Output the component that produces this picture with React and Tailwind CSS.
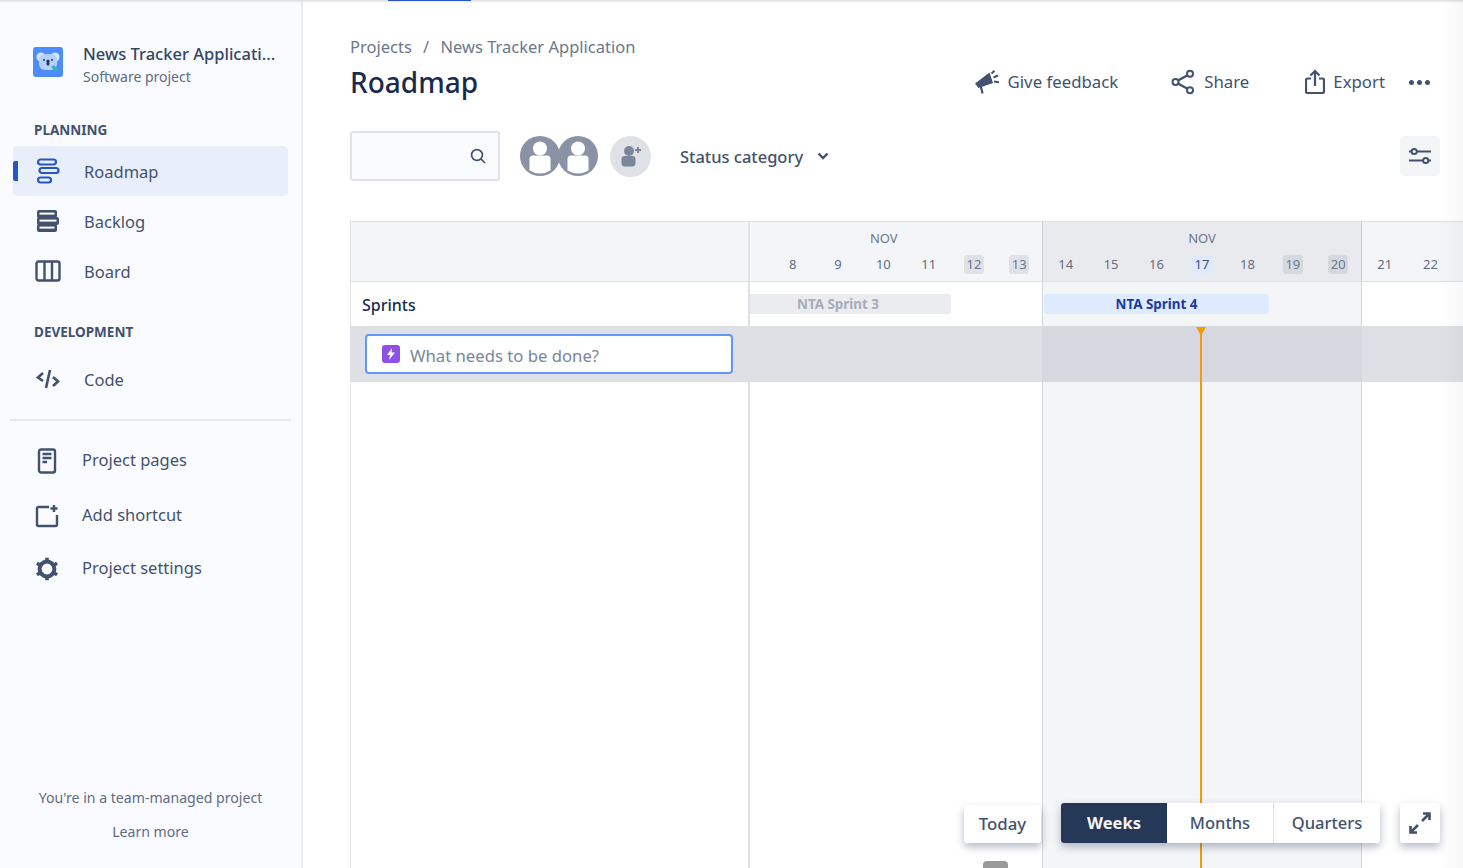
const DAYS_A = [8, 9, 10, 11, 12, 13]
const DAYS_B = [14, 15, 16, 17, 18, 19, 20]
const DAYS_C = [21, 22]

function Koala() {
  return (
    <svg width="30" height="30" viewBox="0 0 30 30">
      <rect width="30" height="30" rx="3" fill="#4c8cff" />
      <circle cx="8" cy="10" r="4.5" fill="#d6e6ff" />
      <circle cx="22" cy="10" r="4.5" fill="#d6e6ff" />
      <rect x="6" y="7" width="18" height="16" rx="6" fill="#b3d0ff" />
      <circle cx="11" cy="13" r="1" fill="#253858" />
      <circle cx="19" cy="13" r="1" fill="#253858" />
      <rect x="13.5" y="12.5" width="3" height="6" rx="1.5" fill="#253858" />
      <path d="M18 20l3-2 4 5-2 2z" fill="#36b3a8" />
    </svg>
  )
}

const ic = { fill: 'none', stroke: '#42526e', strokeWidth: 2 }

function RoadmapIcon() {
  return (
    <svg width="24" height="26" viewBox="0 0 24 26" fill="none" stroke="#2456c9" strokeWidth="2.2">
      <rect x="2" y="1.5" width="18" height="5" rx="2.5" />
      <rect x="3.5" y="10" width="19" height="5" rx="2.5" />
      <rect x="2" y="19.5" width="13" height="5" rx="2.5" />
    </svg>
  )
}

function BacklogIcon() {
  return (
    <svg width="24" height="24" viewBox="0 0 24 24">
      <rect x="1" y="1" width="20" height="8" rx="2" fill="#42526e" />
      <rect x="1" y="8" width="22" height="8" rx="2" fill="#42526e" />
      <rect x="1" y="15" width="20" height="8" rx="2" fill="#42526e" />
      <rect x="3.5" y="3.6" width="15" height="2" fill="#fafbfe" />
      <rect x="3.5" y="10.6" width="17" height="2" fill="#fafbfe" />
      <rect x="3.5" y="17.6" width="15" height="2" fill="#fafbfe" />
    </svg>
  )
}

function BoardIcon() {
  return (
    <svg width="26" height="22" viewBox="0 0 26 22" {...ic} strokeWidth="2.4">
      <rect x="1.5" y="1.5" width="23" height="19" rx="2" />
      <path d="M9.5 2v18M17 2v18" />
    </svg>
  )
}

function CodeIcon() {
  return (
    <svg width="24" height="22" viewBox="0 0 24 22" {...ic} strokeWidth="2.6">
      <path d="M7 5l-5 4.5L7 13M17 9l5 4.5L17 18M14 2L10 20" />
    </svg>
  )
}

function PagesIcon() {
  return (
    <svg width="20" height="26" viewBox="0 0 20 26" {...ic} strokeWidth="2.4">
      <rect x="2" y="1.5" width="16" height="23" rx="2" />
      <path d="M5.5 6h9M5.5 10h9M5.5 14h4.5" />
    </svg>
  )
}

function ShortcutIcon() {
  return (
    <svg width="24" height="24" viewBox="0 0 24 24" {...ic} strokeWidth="2.4">
      <path d="M14 3H3.5a1.5 1.5 0 0 0-1.5 1.5v16A1.5 1.5 0 0 0 3.5 22h17a1.5 1.5 0 0 0 1.5-1.5V11" />
      <path d="M19 1v7M15.5 4.5h7" />
    </svg>
  )
}

function GearIcon() {
  return (
    <svg width="24" height="24" viewBox="0 0 24 24" fill="none" stroke="#42526e">
      <circle cx="12" cy="12" r="7.4" strokeWidth="4" />
      <path
        strokeWidth="3.6"
        d="M12 0.8v3M12 20.2v3M1.9 6.2l2.6 1.5M19.5 16.3l2.6 1.5M1.9 17.8l2.6-1.5M19.5 7.7l2.6-1.5"
      />
    </svg>
  )
}

function NavItem({ icon, label, active }) {
  return (
    <div className={`relative flex h-[50px] w-[275px] items-center rounded-[4px] ${active ? 'bg-[#e8effb]' : ''}`}>
      {active && <span className="absolute left-0 top-[15px] h-[20px] w-[5px] rounded-l-[2px] bg-[#2456c9]" />}
      <span className="flex w-[71px] justify-center pr-[1px]">{icon}</span>
      <span className="pt-[3px] text-[16.5px] text-[#42526e]">{label}</span>
    </div>
  )
}

function ExtraItem({ icon, label, h }) {
  return (
    <div className={`flex items-center ${h}`}>
      <span className="flex w-[72px] justify-center pl-[2px]">{icon}</span>
      <span className="text-[16.5px] text-[#42526e]">{label}</span>
    </div>
  )
}

function Sidebar() {
  return (
    <aside className="flex h-full w-[303px] shrink-0 flex-col border-r-[2px] border-[#ebecf0] bg-[#fafbfe]">
      <div className="flex h-[87px] items-center pl-[33px] pt-[37px]">
        <Koala />
        <div className="ml-[20px] min-w-0 pt-[4px]">
          <p className="whitespace-nowrap text-[16.5px] font-medium leading-[24px] text-[#344563]">
            News Tracker Applicati...
          </p>
          <p className="mt-[1px] text-[14px] leading-[20px] text-[#5e6c84]">Software project</p>
        </div>
      </div>

      <h3 className="pl-[34px] pt-[33px] text-[13.5px] font-bold leading-[20px] text-[#42526e]">PLANNING</h3>
      <div className="pl-[13px] pt-[6px]">
        <NavItem active icon={<RoadmapIcon />} label="Roadmap" />
        <NavItem icon={<BacklogIcon />} label="Backlog" />
        <NavItem icon={<BoardIcon />} label="Board" />
      </div>

      <h3 className="pl-[34px] pt-[26px] text-[13.5px] font-bold leading-[20px] text-[#42526e]">DEVELOPMENT</h3>
      <div className="pl-[13px] pt-[12px]">
        <NavItem icon={<CodeIcon />} label="Code" />
      </div>

      <div className="mx-[10px] mt-[15px] h-[2px] bg-[#e6e7eb]" />

      <div className="pl-[10px] pt-[12px]">
        <ExtraItem h="h-[55px]" icon={<PagesIcon />} label="Project pages" />
        <ExtraItem h="h-[55px]" icon={<ShortcutIcon />} label="Add shortcut" />
        <ExtraItem h="h-[51px]" icon={<GearIcon />} label="Project settings" />
      </div>

      <div className="mt-auto pb-[26px] text-center text-[14.1px] text-[#5e6c84]">
        <p className="leading-[20px]">You're in a team-managed project</p>
        <p className="pt-[14px] leading-[20px]">Learn more</p>
      </div>
    </aside>
  )
}

function ActionsBar() {
  return (
    <div className="flex items-center text-[16.8px] text-[#42526e]">
      <svg width="24" height="24" viewBox="0 0 24 24" fill="#42526e" className="mr-[9px]">
        <path d="M0 13.5L14.5 2.5 18 13 3.5 18z" />
        <path d="M6 17l1.5 6.5" stroke="#42526e" strokeWidth="2.2" />
        <path d="M16.5 3.5L19.5 0.8M18.5 7.5L23 5.5M19 11.5l5 .8" stroke="#42526e" strokeWidth="2" />
      </svg>
      <span>Give feedback</span>
      <svg width="24" height="26" viewBox="0 0 24 26" {...ic} className="ml-[53px] mr-[9px]">
        <circle cx="19" cy="4.8" r="3" />
        <circle cx="4.5" cy="13" r="3" />
        <circle cx="19" cy="21.2" r="3" />
        <path d="M7 11.5l9.5-5.2M7 14.5l9.5 5.2" strokeWidth="2.4" />
      </svg>
      <span>Share</span>
      <svg width="20" height="26" viewBox="0 0 20 26" {...ic} strokeWidth="2.2" className="ml-[56px] mr-[8px]">
        <path d="M6 9.5H2.5A1.5 1.5 0 0 0 1 11v11.5A1.5 1.5 0 0 0 2.5 24h15a1.5 1.5 0 0 0 1.5-1.5V11a1.5 1.5 0 0 0-1.5-1.5H14" />
        <path d="M10 17V2M5.5 6.5L10 2l4.5 4.5" />
      </svg>
      <span>Export</span>
      <div className="ml-[24px] flex gap-[3px]">
        <span className="h-[5px] w-[5px] rounded-full bg-[#42526e]" />
        <span className="h-[5px] w-[5px] rounded-full bg-[#42526e]" />
        <span className="h-[5px] w-[5px] rounded-full bg-[#42526e]" />
      </div>
    </div>
  )
}

function Avatar({ className }) {
  return (
    <svg width="40" height="40" viewBox="0 0 40 40" className={className}>
      <circle cx="20" cy="20" r="20" fill="#8a92a6" />
      <circle cx="20" cy="12.5" r="7" fill="#fff" />
      <path d="M9.5 23a3.5 3.5 0 0 1 3.5-3.5h14a3.5 3.5 0 0 1 3.5 3.5v11.5a20 20 0 0 1-21 0z" fill="#fff" />
    </svg>
  )
}

function Filters() {
  return (
    <div className="flex h-[50px] items-center pr-[23px]">
      <div className="flex h-[50px] w-[150px] items-center justify-end rounded-[3px] border-[2px] border-[#dfe1e6] bg-[#fafbfc] pr-[11px]">
        <svg width="18" height="18" viewBox="0 0 18 18" fill="none" stroke="#42526e" strokeWidth="1.7">
          <circle cx="8" cy="8" r="5.4" />
          <path d="M12 12l4 4" />
        </svg>
      </div>
      <Avatar className="ml-[20px]" />
      <Avatar className="-ml-[2px]" />
      <span className="ml-[12px] flex h-[41px] w-[41px] items-center justify-center rounded-full bg-[#dfe1e6]">
        <svg width="24" height="24" viewBox="0 0 24 24" fill="#7a869a">
          <circle cx="10" cy="7" r="5" />
          <path d="M2.5 15a3 3 0 0 1 3-3h8a3 3 0 0 1 3 3v4a3.5 3.5 0 0 1-3.5 3.5h-7A3.5 3.5 0 0 1 2.5 19z" />
          <path d="M19 3v6M16 6h6" stroke="#7a869a" strokeWidth="2" />
        </svg>
      </span>
      <span className="ml-[29px] pt-[2px] text-[16.5px] font-medium text-[#42526e]">Status category</span>
      <svg width="12" height="8" viewBox="0 0 12 8" fill="none" stroke="#42526e" strokeWidth="2.4" className="ml-[14px]">
        <path d="M1.5 1.5L6 6l4.5-4.5" />
      </svg>
      <span className="ml-auto flex h-[40px] w-[40px] items-center justify-center rounded-[3px] bg-[#f4f5f7]">
        <svg width="24" height="20" viewBox="0 0 24 20" fill="none" stroke="#42526e" strokeWidth="2">
          <path d="M1 5.5h2.5M9 5.5h14M1 14.5h14M20.5 14.5H23" />
          <circle cx="6.2" cy="5.5" r="2.6" />
          <circle cx="17.7" cy="14.5" r="2.6" />
        </svg>
      </span>
    </div>
  )
}

function Day({ n, kind }) {
  const tone =
    kind === 'today'
      ? 'bg-[#deebff] text-[#42526e]'
      : kind === 'weekend'
        ? 'bg-[#dfe1e6] text-[#6b778c]'
        : kind === 'weekend2'
          ? 'bg-[#d5d8df] text-[#6b778c]'
          : ''
  return (
    <div className="flex w-[45.6px] justify-center">
      <span className={`flex h-[19px] min-w-[20px] items-center justify-center rounded-[3px] px-[1px] pt-[1px] text-[13px] ${tone}`}>
        {n}
      </span>
    </div>
  )
}

function Timeline() {
  return (
    <div className="relative mt-[40px] flex min-h-0 flex-1 flex-col border-l border-t border-[#dfe1e6] text-[#6b778c]">
      {/* month header */}
      <div className="flex h-[60px] shrink-0 border-b border-[#dfe1e6] bg-[#f4f5f7]">
        <div className="w-[399px] shrink-0 border-r-[2px] border-[#dfe1e6]" />
        <div className="w-[292px] shrink-0 pl-[20px]">
          <p className="ml-[91px] h-[33px] w-[45.6px] pt-[6px] text-center text-[13px] leading-[20px]">NOV</p>
          <div className="flex text-[#5e6c84]">
            {DAYS_A.map((d) => (
              <Day key={d} n={d} kind={d > 11 ? 'weekend' : ''} />
            ))}
          </div>
        </div>
        <div className="w-[320px] shrink-0 border-x border-[#c9ccd4] bg-[#e9eaee]">
          <p className="h-[33px] pt-[6px] text-center text-[13px] leading-[20px]">NOV</p>
          <div className="flex text-[#6b6b7c]">
            {DAYS_B.map((d) => (
              <Day key={d} n={d} kind={d === 17 ? 'today' : d > 18 ? 'weekend2' : ''} />
            ))}
          </div>
        </div>
        <div className="flex-1 pt-[33px]">
          <div className="flex text-[#5e6c84]">
            {DAYS_C.map((d) => (
              <Day key={d} n={d} />
            ))}
          </div>
        </div>
      </div>

      {/* sprints row */}
      <div className="flex h-[44px] shrink-0">
        <div className="flex w-[399px] shrink-0 items-center border-r-[2px] border-[#dfe1e6] pl-[11px] pt-[1px] text-[16px] font-medium text-[#172b4d]">
          Sprints
        </div>
        <div className="w-[292px] shrink-0 pt-[12px]">
          <div className="flex h-[20px] w-[201px] items-center rounded-r-[3px] bg-[#ebecf0] pl-[47px] text-[13.4px] font-bold text-[#a5adba]">
            NTA Sprint 3
          </div>
        </div>
        <div className="w-[320px] shrink-0 border-x border-[#d5d8df] bg-[#f4f5f7] pl-[1px] pt-[12px]">
          <div className="flex h-[20px] w-[225px] items-center justify-center rounded-[3px] bg-[#deebff] text-[13.4px] font-bold text-[#1a3a9c]">
            NTA Sprint 4
          </div>
        </div>
        <div className="flex-1" />
      </div>

      {/* create row */}
      <div className="flex h-[56px] shrink-0 bg-[#dfe0e5]">
        <div className="flex w-[691px] shrink-0 items-center pl-[14px]">
          <div className="flex h-[40px] w-[368px] items-center rounded-[4px] border-[2px] border-[#5f97fb] bg-white pl-[15px]">
            <span className="flex h-[18px] w-[18px] items-center justify-center rounded-[3px] bg-[#8f50e8]">
              <svg width="10" height="12" viewBox="0 0 10 12" fill="#fff">
                <path d="M6 0L1 7h3l-1 5 6-7.5H5.5z" />
              </svg>
            </span>
            <span className="ml-[10px] pt-[3px] text-[16.7px] text-[#7a869a]">What needs to be done?</span>
          </div>
        </div>
        <div className="w-[320px] shrink-0 bg-[#d5d8df]" />
        <div className="flex-1" />
      </div>

      {/* empty body */}
      <div className="flex min-h-0 flex-1">
        <div className="w-[399px] shrink-0 border-r-[2px] border-[#dfe1e6]" />
        <div className="w-[292px] shrink-0" />
        <div className="w-[320px] shrink-0 border-x border-[#d5d8df] bg-[#f4f5f7]" />
        <div className="flex-1" />
      </div>

      {/* today marker */}
      <div className="absolute bottom-0 left-[849px] top-[105px] w-[2px] bg-[#f29d05]" />
      <div className="absolute left-[845px] top-[105px] h-0 w-0 border-x-[5px] border-t-[9px] border-x-transparent border-t-[#f29d05]" />
    </div>
  )
}

function ViewControls() {
  const cell = 'flex h-full items-center justify-center text-[16.5px]'
  return (
    <>
      <div className="absolute left-[964px] top-[805px] flex h-[38px] w-[77px] items-center justify-center rounded-[3px] bg-white text-[16.8px] font-medium text-[#42526e] shadow-[0_4px_8px_rgba(9,30,66,0.3)]">
        Today
      </div>
      <div className="absolute left-[1061px] top-[803px] flex h-[40px] w-[319px] rounded-[3px] bg-white shadow-[0_4px_8px_rgba(9,30,66,0.3)]">
        <div className={`${cell} w-[106px] rounded-l-[3px] bg-[#253858] font-bold text-[#f4f5f7]`}>Weeks</div>
        <div className={`${cell} w-[107px] border-r border-[#dfe1e6] font-medium text-[#42526e]`}>Months</div>
        <div className={`${cell} flex-1 font-medium text-[#42526e]`}>Quarters</div>
      </div>
      <div className="absolute left-[1400px] top-[803px] flex h-[40px] w-[40px] items-center justify-center rounded-[3px] bg-white shadow-[0_4px_8px_rgba(9,30,66,0.3)]">
        <svg width="22" height="22" viewBox="0 0 22 22" fill="none" stroke="#42526e" strokeWidth="2.6">
          <path d="M13 9l7-7M14 1.5h6.5V8M9 13l-7 7M1.5 14v6.5H8" />
        </svg>
      </div>
      <div className="absolute left-[983px] top-[861px] h-[7px] w-[25px] rounded-t-[4px] bg-[#999999]" />
    </>
  )
}

export default function App() {
  return (
    <div className="relative flex h-[868px] w-[1463px] overflow-hidden bg-white font-['Noto_Sans',sans-serif]">
      <Sidebar />
      <main className="flex min-w-0 flex-1 flex-col pl-[47px]">
        <div className="flex h-[131px] shrink-0 flex-col">
          <p className="pt-[35px] text-[16.5px] leading-[24px] text-[#6b778c]">
            Projects <span className="px-[7px]">/</span> News Tracker Application
          </p>
          <div className="flex items-center justify-between pr-[33px] pt-[4px]">
            <h1 className="text-[28px] font-medium leading-[38px] text-[#172b4d]">Roadmap</h1>
            <ActionsBar />
          </div>
        </div>
        <Filters />
        <Timeline />
      </main>
      <ViewControls />
      {/* top edge shadow and active tab sliver */}
      <div className="absolute inset-x-0 top-0 h-[3px] bg-gradient-to-b from-[#dcdee2] to-transparent" />
      <div className="absolute left-[388px] top-0 h-[1px] w-[83px] bg-[#2456c9]" />
      <div className="pointer-events-none absolute inset-y-0 right-0 w-[24px] bg-gradient-to-r from-transparent to-black/[0.03]" />
    </div>
  )
}
